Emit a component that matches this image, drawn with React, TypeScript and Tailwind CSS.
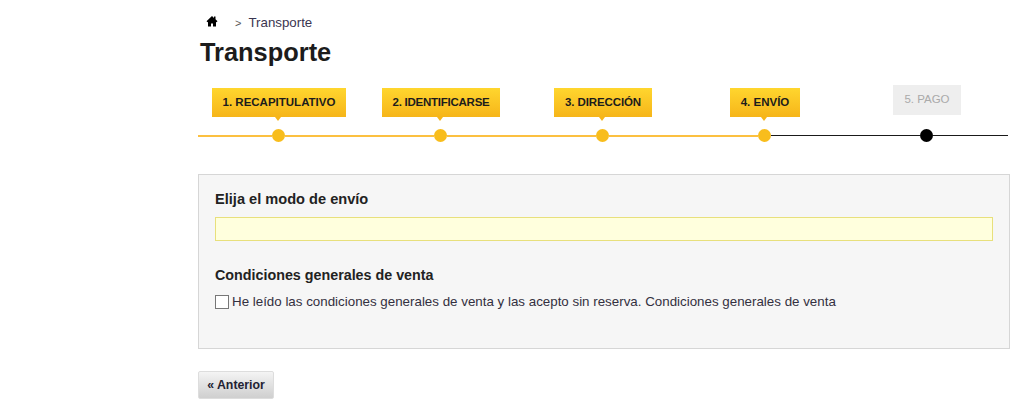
const steps = [
  { label: '1. RECAPITULATIVO', done: true, left: 'h-[2px] bg-[#fcc040]', right: 'h-[2px] bg-[#fcc040]', text: 'px-[11px]' },
  { label: '2. IDENTIFICARSE', done: true, left: 'h-[2px] bg-[#fcc040]', right: 'h-[2px] bg-[#fcc040]', text: 'px-[10.5px] tracking-[-0.25px]' },
  { label: '3. DIRECCIÓN', done: true, left: 'h-[2px] bg-[#fcc040]', right: 'h-[2px] bg-[#fcc040]', text: 'px-[10.5px] tracking-[-0.1px]' },
  { label: '4. ENVÍO', done: true, left: 'h-[2px] bg-[#fcc040]', right: 'h-px bg-[#1a1a1a]', text: 'px-[11px]' },
  { label: '5. PAGO', done: false, left: 'h-px bg-[#1a1a1a]', right: 'h-px bg-[#1a1a1a]', text: 'px-[11px]' },
];

function Step({ label, done, left, right, text }: (typeof steps)[number]) {
  return (
    <div className="flex flex-col items-center">
      <div className="flex h-[29px] items-center">
        {done ? (
          <div className={`relative flex h-[29px] items-center bg-gradient-to-b from-[#ffd62e] to-[#f6b519] text-[11.5px] font-bold text-[#1c1c1c] ${text}`}>
            {label}
            {/* little arrow pointing to the dot */}
            <span className="absolute left-1/2 top-full -ml-[4px] border-x-[3px] border-t-[4px] border-x-transparent border-t-[#f6b519]" />
          </div>
        ) : (
          <div className={`flex h-[30px] -translate-y-[3px] items-center bg-[#eeeeee] text-[11.5px] text-[#aaaaaa] ${text}`}>
            {label}
          </div>
        )}
      </div>
      <div className="mt-[12px] flex w-full items-center">
        <div className={`w-[74px] ${left}`} />
        <div className={`h-[13px] w-[13px] rounded-full ${done ? 'bg-[#f8bd1c]' : 'bg-black'}`} />
        <div className={`flex-1 ${right}`} />
      </div>
    </div>
  );
}

export default function App() {
  return (
    <div className="h-[416px] overflow-hidden bg-white font-['Liberation_Sans',Arial,sans-serif] text-[#222222]">
      <div className="ml-[198px] w-[812px]">
        {/* Breadcrumb */}
        <nav className="flex h-[16px] translate-y-[15px] items-center text-[13.3px] text-[#3a3550]">
          <svg viewBox="0 0 24 24" className="ml-[8px] h-[12px] w-[12px] -translate-y-[2px] fill-black">
            <path d="M12 2 L1 12.5 L3.2 14.6 L4 13.9 V23 H10 V17 H14 V23 H20 V13.9 L20.8 14.6 L23 12.5 L19 8.7 V3 H16 V5.9 Z" />
          </svg>
          <span className="ml-[17px] text-[11px] text-[#555555]">&gt;</span>
          <span className="ml-[7px]">Transporte</span>
        </nav>

        <h1 className="ml-[2px] mt-[21px] text-[25.4px] font-bold leading-[30px] text-[#1c1c1c]">Transporte</h1>

        {/* Order steps */}
        <div className="mt-[21px] grid w-[810px] grid-cols-5">
          {steps.map((step) => (
            <Step key={step.label} {...step} />
          ))}
        </div>

        {/* Shipping form */}
        <div className="mt-[32px] h-[175px] border border-[#d6d6d6] bg-[#f6f6f6] px-4 pt-[16px]">
          <h3 className="text-[14.6px] font-bold leading-[17px] text-[#222222]">Elija el modo de envío</h3>
          <div className="mt-[9px] h-6 w-[778px] border border-[#e8e07c] bg-[#ffffdd]" />
          <h3 className="mt-[26px] text-[14.3px] font-bold leading-[17px] text-[#222222]">
            Condiciones generales de venta
          </h3>
          <label className="mt-[8px] flex items-center text-[13.35px] text-[#333040]">
            <span className="h-[14px] w-[14px] border border-[#777777] bg-white" />
            <span className="ml-[3px]">
              He leído las condiciones generales de venta y las acepto sin reserva.{' '}
              <span className="font-medium">Condiciones generales de venta</span>
            </span>
          </label>
        </div>

        <button className="mt-[22px] flex h-[28px] w-[76px] items-center justify-center rounded-[2px] border border-[#dddddd] bg-gradient-to-b from-[#f4f4f4] to-[#cfcfcf] text-[12.3px] font-bold text-[#222233]">
          « Anterior
        </button>
      </div>
    </div>
  );
}
